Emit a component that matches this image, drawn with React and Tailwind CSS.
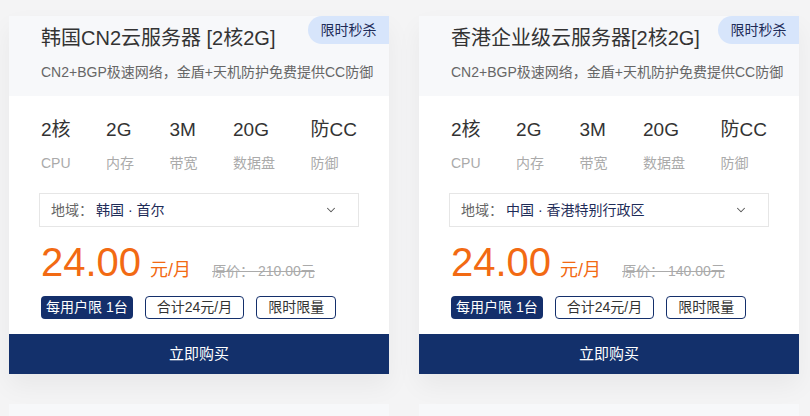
import { ChevronDown } from "lucide-react";

const products = [
    {
        title: "韩国CN2云服务器 [2核2G]",
        region: "韩国 · 首尔",
        price: "24.00",
        original: "210.00元",
    },
    {
        title: "香港企业级云服务器[2核2G]",
        region: "中国 · 香港特别行政区",
        price: "24.00",
        original: "140.00元",
    },
];

const specs = [
    { value: "2核", label: "CPU" },
    { value: "2G", label: "内存" },
    { value: "3M", label: "带宽" },
    { value: "20G", label: "数据盘" },
    { value: "防CC", label: "防御" },
];

function ProductCard({ item }) {
    return (
        <div className="w-[380px] shrink-0 bg-white shadow-[0_12px_24px_rgba(0,0,0,0.05)]">
            {/* 头部 */}
            <div className="relative h-[80px] bg-[#f7f8fa] pl-8 pt-[7px]">
                <div className="absolute right-0 top-0 flex h-[28px] w-[81px] items-center justify-center rounded-l-full bg-[#d7e5fb] text-[14px] text-[#1e2c58]">
                    限时秒杀
                </div>
                <div className="text-[20px] leading-[30px] text-[#333]">{item.title}</div>
                <div className="mt-[9px] text-[14px] leading-[20px] text-[#666]">
                    CN2+BGP极速网络，金盾+天机防护免费提供CC防御
                </div>
            </div>

            {/* 配置 */}
            <div className="px-8 pt-[20px]">
                <div className="flex justify-between">
                    {specs.map((s) => (
                        <div key={s.label} className="flex flex-col">
                            <span className="text-[19px] leading-[28px] text-[#333]">{s.value}</span>
                            <span className="mt-[9px] text-[14px] leading-[20px] text-[#aaa]">{s.label}</span>
                        </div>
                    ))}
                </div>
            </div>

            <div className="px-[30px] pt-[20px]">
                <div className="flex h-[34px] items-center justify-between border border-[#e6e6e6] pl-[11px] pr-[20px] text-[14px]">
                    <div>
                        <span className="text-[#666]">地域：</span>
                        <span className="ml-[3px] text-[#1e2c58]">{item.region}</span>
                    </div>
                    <ChevronDown size={14} strokeWidth={1.8} className="text-[#555]" />
                </div>
            </div>

            {/* 价格 */}
            <div className="flex items-baseline px-8 pt-[10px]">
                <span className="text-[40px] leading-[50px] text-[#f26a13]">{item.price}</span>
                <span className="ml-[9px] text-[18px] text-[#f26a13]">元/月</span>
                <span className="ml-[21px] text-[14px] text-[#aaa] line-through">原价： {item.original}</span>
            </div>

            <div className="flex gap-3 px-8 pt-[9px] text-[14px]">
                <span className="flex h-[23px] items-center rounded-sm bg-[#142f6b] px-[5px] text-white">每用户限 1台</span>
                <span className="flex h-[23px] items-center rounded-sm border border-[#142f6b] px-[11px] text-[#333]">合计24元/月</span>
                <span className="flex h-[23px] items-center rounded-sm border border-[#142f6b] px-[11px] text-[#333]">限时限量</span>
            </div>

            <button className="mt-[15px] flex h-[40px] w-full items-center justify-center bg-[#13306b] text-[15px] text-white">
                立即购买
            </button>
        </div>
    );
}

export default function App() {
    return (
        <div
            className="h-[416px] w-[810px] overflow-hidden bg-[#f4f4f5] px-[9px] pt-[16px]"
            style={{ fontFamily: '"Liberation Sans", "Noto Sans CJK SC", sans-serif' }}
        >
            <div className="flex gap-[30px]">
                {products.map((p) => (
                    <ProductCard key={p.title} item={p} />
                ))}
            </div>
            {/* 下一行卡片 */}
            <div className="mt-[30px] flex gap-[30px]">
                <div className="h-[80px] w-[380px] bg-[#f7f8fa]" />
                <div className="h-[80px] w-[380px] bg-[#f7f8fa]" />
            </div>
        </div>
    );
}
